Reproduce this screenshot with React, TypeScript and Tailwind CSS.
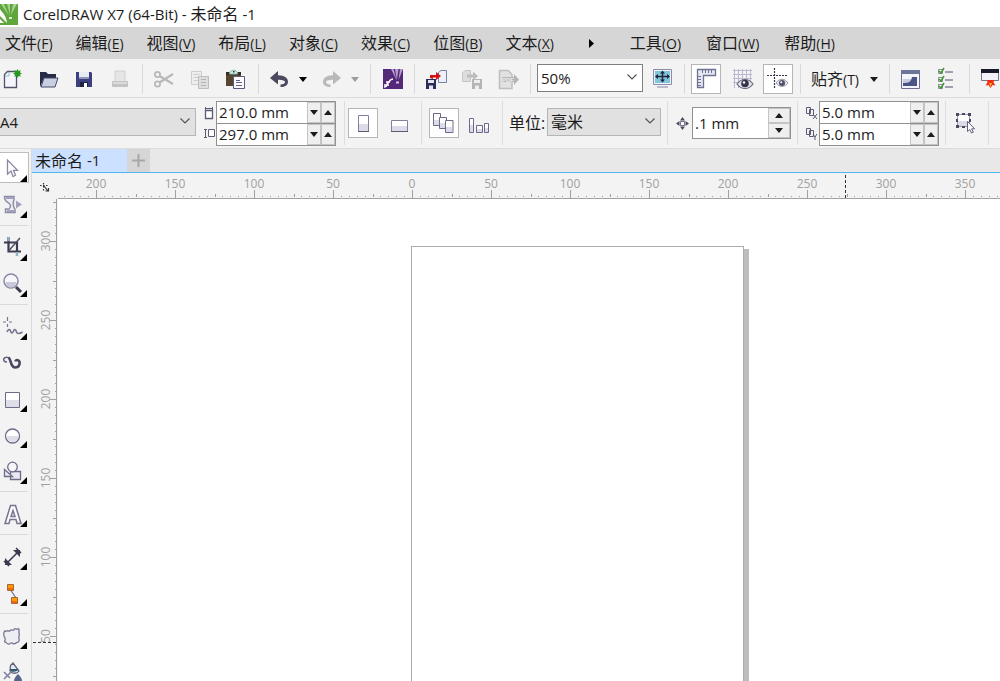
import React, {useEffect, useState} from "react"
import clsx from "clsx";

const PX_PER_MM = 1.58;

const menus = [
    {label: "文件", hotkey: "F"},
    {label: "编辑", hotkey: "E"},
    {label: "视图", hotkey: "V"},
    {label: "布局", hotkey: "L"},
    {label: "对象", hotkey: "C"},
    {label: "效果", hotkey: "C"},
    {label: "位图", hotkey: "B"},
    {label: "文本", hotkey: "X"},
];

const moreMenus = [
    {label: "工具", hotkey: "O"},
    {label: "窗口", hotkey: "W"},
    {label: "帮助", hotkey: "H"},
];

/* ---------- shared bits ---------- */

const MenuButton = ({label, hotkey}: { label: string, hotkey: string }) => (
    <button type="button" className="flex items-baseline text-[16px] hover:bg-gray-300">
        {label}<span className="text-[14px]">(<u className="underline-offset-2">{hotkey}</u>)</span>
    </button>
);

const Separator = () => (
    <div className="flex h-[30px] w-2 justify-center">
        <div className="w-px bg-[#d9d9d9]"/>
    </div>
);

const Divider = () => <div className="h-[44px] w-px bg-[#dedede]"/>;

type IconButtonProps = {
    label: string,
    pressed?: boolean,
    disabled?: boolean,
    onClick?: () => void,
    children: React.ReactNode
}

const IconButton = ({label, pressed, disabled, onClick, children}: IconButtonProps) => (
    <button
        type="button"
        aria-label={label}
        disabled={disabled}
        onClick={onClick}
        className={clsx("mx-[3px] flex h-[30px] w-[30px] items-center justify-center", pressed && "border border-[#b5b5b5] bg-white")}
    >
        <svg width="24" height="24" viewBox="0 0 24 24" fill="none" className="shrink-0">{children}</svg>
    </button>
);

const Triangle = ({dir, className}: { dir: "up" | "down", className?: string }) => (
    <svg width="8" height="5" viewBox="0 0 8 5" className={className} fill="currentColor">
        {dir === "down" ? <path d="M0 0h8L4 5z"/> : <path d="M0 5h8L4 0z"/>}
    </svg>
);

const DropArrow = ({label, disabled}: { label: string, disabled?: boolean }) => (
    <button type="button" aria-label={label} disabled={disabled}
            className="flex h-[30px] w-4 items-center pl-px text-black disabled:text-[#9c9c9c]">
        <Triangle dir="down"/>
    </button>
);

type SelectProps = {
    label: string,
    options: string[],
    className: string,
    boxClassName: string
}

const Select = ({label, options, className, boxClassName}: SelectProps) => (
    <div className={clsx("relative", boxClassName)}>
        <select aria-label={label} className={clsx("h-full w-full appearance-none border pl-[3px] leading-none outline-none", className)}>
            {options.map(option => <option key={option}>{option}</option>)}
        </select>
        <svg width="10" height="6" viewBox="0 0 10 6" fill="none" stroke="#555" strokeWidth="1.2"
             className="pointer-events-none absolute right-[6px] top-[10px]">
            <path d="M.5 .5 5 5 9.500 .5"/>
        </svg>
    </div>
);

const SpinField = ({label, initial}: { label: string, initial: string }) => {
    const [value, setValue] = useState(initial)

    const step = (amount: number) => {
        setValue(`${(parseFloat(value) + amount).toFixed(1)} mm`);
    };

    return (
        <div className="-mt-px flex h-[23px] w-[120px] border border-[#919191] bg-white">
            <input
                aria-label={label}
                value={value}
                onChange={(e) => setValue(e.target.value)}
                className="w-0 flex-1 pl-[2px] pt-px text-[15px] outline-none"
            />
            <button type="button" aria-label={`${label} -`} onClick={() => step(-1)}
                    className="flex w-[14px] items-center justify-center border border-[#c4c4c4] bg-[#efefef]">
                <Triangle dir="down" className="shrink-0"/>
            </button>
            <button type="button" aria-label={`${label} +`} onClick={() => step(1)}
                    className="flex w-[14px] items-center justify-center border border-[#c4c4c4] bg-[#efefef]">
                <Triangle dir="up" className="shrink-0"/>
            </button>
        </div>
    )
};

/* ---------- standard toolbar ---------- */

const StandardBar = () => {
    const [rulers, setRulers] = useState(true)
    const [grid, setGrid] = useState(false)
    const [guides, setGuides] = useState(true)

    return (
        <div className="-ml-[6px] flex h-[38px] items-end pb-[3px] *:shrink-0">
            <IconButton label="新建">
                <path d="M4.500 7.500 7.500 4.500H16.500V20.500H4.500z" fill="#f4f6fb" stroke="#55536b" strokeWidth="1.300"/>
                <path d="M5 9h4V5" stroke="#8fc4b8"/>
                <path d="m17.500 2 1 2 2.200-.7-.7 2.200 2 1-2 1 .7 2.200-2.200-.7-1 2-1-2-2.200.7.7-2.200-2-1 2-1-.7-2.200 2.200.7z" fill="#259a1c"/>
            </IconButton>
            <IconButton label="打开">
                <path d="M4 5h6l2 2h8v4H8l-4 9z" fill="#272a47"/>
                <path d="M8 11h14l-3 9H5z" fill="#c9cfe2" stroke="#464a68"/>
            </IconButton>
            <IconButton label="保存">
                <path d="M4 5h15l1 1v14H4z" fill="#3b3f80"/>
                <path d="M7 5h10v7H7z" fill="#e8eaf4"/>
                <path d="M7 10h10v2H7z" fill="#8f93b8"/>
                <path d="M8 15h8v5H8z" fill="#20223f"/>
                <path d="M12 16h3v4h-3z" fill="#fff"/>
            </IconButton>
            <IconButton label="打印" disabled>
                <path d="M7 4h10v11H7z" fill="#e6e6e6" stroke="#d0d0d0"/>
                <path d="M4 14h16v6H4z" fill="#c3c3c3"/>
                <path d="M5 15h14v2H5z" fill="#dadada"/>
            </IconButton>
            <Separator/>
            <IconButton label="剪切" disabled>
                <g stroke="#b9b9b9" strokeWidth="1.800">
                    <circle cx="5.500" cy="7.500" r="2.600"/>
                    <circle cx="5.500" cy="17" r="2.600"/>
                    <path d="M7.500 9 21 17M7.500 15.500 21 7" strokeWidth="2.200"/>
                </g>
            </IconButton>
            <IconButton label="复制" disabled>
                <g stroke="#cdcdcd" fill="#eeeeee">
                    <path d="M3.500 4.500h10v13h-10z"/>
                    <path d="M5.500 7.500h6M5.500 10.500h6M5.500 13.500h4"/>
                    <path d="M10.500 9.500H20.500V21.500H10.500z" fill="#ddd" stroke="#bdbdbd"/>
                    <path d="M13 12.500h5M13 15.500h5M13 18.500h5" stroke="#b5b5b5"/>
                </g>
            </IconButton>
            <IconButton label="粘贴">
                <path d="M2 5h15v14H2z" fill="#57452e"/>
                <path d="M2 5h15v3H2z" fill="#3a2d1d"/>
                <path d="M5.500 7c0-5 8-5 8 0z" fill="#d7efeb" stroke="#7fb9b2"/>
                <path d="M9 4h1.500v1.500H9z" fill="#3a2d1d"/>
                <path d="M9.500 9.500H20.500V21.500H9.500z" fill="#fafaff" stroke="#5d5b78"/>
                <path d="M12 13.500h4M12 15.500h6M12 18.500h6" stroke="#64648c"/>
            </IconButton>
            <Separator/>
            <IconButton label="撤消">
                <path d="M2 11 10 4v4.200c7 0 10 3 10 6.500 0 3.500-3 5.300-7.500 5.300v-2.500c3 0 4.500-1 4.500-2.500 0-1.300-2-2.300-7-2.300V17.500z" fill="#4b4960"/>
            </IconButton>
            <DropArrow label="撤消列表"/>
            <IconButton label="重做" disabled>
                <path d="M21 11 13 4v4.200c-7 0-10 3-10 6.500C3 18.200 6 20 10.500 20v-2.500C7.500 17.500 6 16.500 6 15c0-1.300 2-2.300 7-2.300V17.500z" fill="#b9b9b9"/>
            </IconButton>
            <DropArrow label="重做列表" disabled/>
            <Separator/>
            <IconButton label="搜索内容">
                <path d="M3 2h20v20H3z" fill="#54297a"/>
                <path d="M11 2h2.500l3 11zM15 2h3.500l-1.700 11zM20 2h3l-4.500 11z" fill="#b59ccc"/>
                <path d="M16 14.500h3v2h-3z" fill="#d6c6e4"/>
                <path d="M4 20c4 0 2-3 4-4s1-4 5-4M6 15h4M4 18h5" stroke="#fff" strokeWidth="1.600"/>
            </IconButton>
            <Separator/>
            <IconButton label="导入">
                <path d="M14.500 5.500 17 3.500H22.500V15.500H14.500z" fill="#eef1fa" stroke="#7781a5"/>
                <path d="M2 12h10v10H2z" fill="#2b2e58"/>
                <path d="M4 13h6v3H4zM5 18.500h4V22H5z" fill="#e4e6f2"/>
                <path d="M6 11V8h6V5l5 4-5 4v-2.500H9V12z" fill="#cc1414"/>
            </IconButton>
            <IconButton label="导出" disabled>
                <path d="M2.500 6 5 3.500h5.500v11h-8z" fill="#ddd" stroke="#c4c4c4"/>
                <path d="M12 12h10v10H12z" fill="#b5b5b5"/>
                <path d="M14 13h6v3h-6zM15 18.500h4V22h-4z" fill="#eee"/>
                <path d="M7 7.500h6V4.500l5 4.500-5 4.500v-3H7z" fill="#bcbcbc"/>
            </IconButton>
            <IconButton label="发布为 PDF" disabled>
                <path d="M3.500 3.500H12l4 4V21.500H3.500z" fill="#e1e1e1" stroke="#bebebe" strokeWidth="1.500"/>
                <path d="M6 10h12V7l5 5.500-5 5.500v-3H6z" fill="#b5b5b5"/>
                <text x="6" y="15" fontSize="6" fontWeight="700" fill="#eee" className="font-['Liberation_Sans',sans-serif]">PDF</text>
            </IconButton>
            <Separator/>
            <Select
                label="缩放级别"
                options={["50%", "75%", "100%", "200%"]}
                boxClassName="ml-[3px] mr-px h-[28px] w-[106px] mb-[2px]"
                className="border-[#7f7f7f] bg-white text-[15px]"
            />
            <IconButton label="全屏预览">
                <path d="M3.500 2.500H21.500V17.500H3.500z" fill="#f1f1f8" stroke="#8d8cab"/>
                <path d="M5 4h15v12H5z" fill="#7fc6d8"/>
                <path d="M7 20h11" stroke="#a9a8c0" strokeWidth="1.500"/>
                <path d="M12.500 5v9M6 9.500h13" stroke="#22243e" strokeWidth="1.500"/>
                <path d="M12.500 3.500l2.500 3h-5zM12.500 15.500l2.500-3h-5zM5 9.500l3-2.500v5zM20 9.500l-3-2.500v5z" fill="#22243e"/>
            </IconButton>
            <Separator/>
            <IconButton label="显示标尺" pressed={rulers} onClick={() => setRulers(!rulers)}>
                <path d="M3.500 2.500h18v6h-12v12h-6z" fill="#e4e6f0" stroke="#6e7394" strokeWidth="1.300"/>
                <path d="M8.500 3v3M11.500 3v3M14.500 3v3M17.500 3v3M4 9.500h3M4 12.500h3M4 15.500h3M4 18.500h3" stroke="#6e7394"/>
            </IconButton>
            <IconButton label="显示网格" pressed={grid} onClick={() => setGrid(!grid)}>
                <path d="M4.500 2v19M8.500 2v19M12.500 2v11M16.500 2v10M20.500 2v12M3 3.500h19M3 7.500h19M3 11.500h19M3 15.500h7" stroke="#b9b8d0"/>
                <path d="M7 17c4-6 12-6 16 0-4 6-12 6-16 0z" fill="#e3e3ea" stroke="#6a6a80" strokeWidth="1.200"/>
                <circle cx="15" cy="16.500" r="3.800" fill="#34354a"/>
                <circle cx="14" cy="15.500" r="1.200" fill="#fff"/>
            </IconButton>
            <IconButton label="显示辅助线" pressed={guides} onClick={() => setGuides(!guides)}>
                <path d="M8.500 1v20M1 8.500h20" stroke="#34344a" strokeWidth="1.200" strokeDasharray="2 1"/>
                <path d="M10 16c3-5 9-5 12 0-3 4.500-9 4.500-12 0z" fill="#e3e3ea" stroke="#9a9aaa"/>
                <circle cx="16" cy="16" r="3" fill="#4f5065"/>
                <circle cx="15.300" cy="15.300" r="1" fill="#fff"/>
            </IconButton>
            <Separator/>
            <button type="button" className="flex h-[30px] w-[81px] items-center justify-between px-[7px] text-[16px]">
                <span className="flex items-baseline">贴齐<span className="text-[14px]">(T)</span></span>
                <Triangle dir="down"/>
            </button>
            <Separator/>
            <IconButton label="欢迎屏幕">
                <path d="M2.500 3.500H20.500V21.500H2.500z" fill="#f4f5fa" stroke="#6d7092"/>
                <path d="M2 3h19v4H2z" fill="#6d7399"/>
                <path d="M4 12h8v7H4z" fill="#c9cde0"/>
                <path d="M4 16c6 0 8-1 9-6h5v9H4z" fill="#4c5486"/>
            </IconButton>
            <IconButton label="选项">
                <path d="M3.500 2.500h4v4h-4zM3.500 10.500h4v4h-4zM3.500 17.500h4v4h-4z" fill="#fff" stroke="#8a8a9b"/>
                <path d="M10 5h8M10 13h8M10 20h8" stroke="#86859c" strokeWidth="1.500"/>
                <path d="m4 4 2 2 3-5M4 12l2 2 3-5M4 19l2 2 3-5" stroke="#3d9a2d" strokeWidth="1.500"/>
            </IconButton>
            <Separator/>
            <IconButton label="应用程序启动器">
                <path d="M2.500 2.500h17v11h-17z" fill="#f2f2f6" stroke="#77778c"/>
                <path d="M2 2h18v4H2z" fill="#17182a"/>
                <path d="M8 13h7l-.5 2.500 2 3-3-.5-2 3-2-3-3 .5 2-3z" fill="#ef2a10"/>
                <path d="M10 16h3l-1.500 4z" fill="#ffb52e"/>
            </IconButton>
        </div>
    )
};

/* ---------- property bar ---------- */

const PropertyBar = () => {
    const [portrait, setPortrait] = useState(true)
    const [allPages, setAllPages] = useState(true)
    const [nudge, setNudge] = useState(".1 mm")

    return (
        <div className="flex h-[50px] items-center *:shrink-0">
            <Select
                label="页面大小"
                options={["A4", "A3", "Letter"]}
                boxClassName="-ml-1 h-[28px] w-[200px] mb-[2px]"
                className="border-[#b5b5b5] bg-[#e1e1e1] text-[15px]"
            />
            <div className="ml-[6px] flex items-center gap-px pr-2">
                <svg width="13" height="36" viewBox="0 0 13 36" fill="none" stroke="#5c5a74">
                    <path d="M3 3.500h8M3.500 2v3M10.500 2v3"/>
                    <path d="M3.500 5.500h7v8h-7z" fill="#fff" strokeWidth="1.300"/>
                    <path d="M3.500 24v9M2 24.500h3M2 32.500h3"/>
                    <path d="M6.500 24.500h6v7h-6z" fill="#fff"/>
                </svg>
                <div className="flex flex-col pt-px">
                    <SpinField label="页面宽度" initial="210.0 mm"/>
                    <SpinField label="页面高度" initial="297.0 mm"/>
                </div>
            </div>
            <Divider/>
            <div className="flex pr-1">
                <IconButton label="纵向" pressed={portrait} onClick={() => setPortrait(true)}>
                    <path d="M7.500 4.500h10v16h-10z" fill="#fff" stroke="#8180a0"/>
                    <path d="M8 13h9v7H8z" fill="#dcdce8"/>
                    <path d="M7 20.500h11" stroke="#5c5a74"/>
                </IconButton>
                <IconButton label="横向" pressed={!portrait} onClick={() => setPortrait(false)}>
                    <path d="M4.500 9.500h16v11h-16z" fill="#fff" stroke="#8180a0"/>
                    <path d="M5 15h15v5H5z" fill="#dcdce8"/>
                    <path d="M4 20.500h17" stroke="#5c5a74"/>
                </IconButton>
            </div>
            <Divider/>
            <div className="flex px-1">
                <IconButton label="所有页面" pressed={allPages} onClick={() => setAllPages(true)}>
                    <g fill="#fff" stroke="#6d6b8a">
                        <path d="M1.500 2.500h7v12h-7z"/>
                        <path d="M7.500 6.500h7v11h-7z"/>
                        <path d="M13.500 9.500h7.500v12h-7.500z"/>
                    </g>
                    <path d="M2 9h5v5H2zM8 12h5v5H8zM14 16h6v5h-6z" fill="#dcdce8"/>
                </IconButton>
                <IconButton label="当前页" pressed={!allPages} onClick={() => setAllPages(false)}>
                    <g fill="#fff" stroke="#6d6b8a">
                        <path d="M1.500 7.500h4v14h-4z"/>
                        <path d="M8.500 14.500h6v7h-6z"/>
                        <path d="M16.500 12.500h4v9h-4z"/>
                    </g>
                    <path d="M2 14h3v7H2zM9 18h5v3H9zM17 17h3v4h-3z" fill="#dcdce8"/>
                </IconButton>
            </div>
            <Divider/>
            <div className="flex items-center pl-[6px] pr-[6px]">
                <span className="w-[38px] whitespace-nowrap text-[16px] leading-none">单位:</span>
                <Select
                    label="单位"
                    options={["毫米", "厘米", "英寸", "像素"]}
                    boxClassName="h-[28px] w-[114px] mb-[2px]"
                    className="border-[#b5b5b5] bg-[#e1e1e1] text-[16px]"
                />
            </div>
            <Divider/>
            <div className="flex items-center gap-[3px] pl-2 pr-[6px]">
                <svg width="13" height="13" viewBox="0 0 13 13">
                    <path d="M6.500 0 9 3.500H4zM6.500 13 9 9.500H4zM0 6.500 3.500 4v5zM13 6.500 9.500 4v5z" fill="#4b4960"/>
                    <path d="M4.500 4.500h4v4h-4z" fill="#fff" stroke="#77758e"/>
                </svg>
                <div className="flex h-[32px] w-[99px] border border-[#919191] bg-white">
                    <input aria-label="微调距离" value={nudge} onChange={(e) => setNudge(e.target.value)}
                           className="w-0 flex-1 pl-[2px] text-[15px] outline-none"/>
                    <div className="flex w-[22px] flex-col">
                        <button type="button" aria-label="增加微调"
                                className="flex flex-1 items-center justify-center border border-[#c4c4c4] bg-[#efefef]">
                            <Triangle dir="up"/>
                        </button>
                        <button type="button" aria-label="减少微调"
                                className="flex flex-1 items-center justify-center border border-[#c4c4c4] bg-[#efefef]">
                            <Triangle dir="down"/>
                        </button>
                    </div>
                </div>
            </div>
            <Divider/>
            <div className="flex items-center gap-px pl-[7px] pr-[6px]">
                <svg width="13" height="36" viewBox="0 0 13 36" fill="none" stroke="#5c5a74">
                    <path d="M1.500 2.500h4v6h-4zM4.500 4.500h4v6h-4zM8 9l4 5M12 9l-4 5"/>
                    <path d="M1.500 23.500h4v6h-4zM4.500 25.500h4v6h-4zM8 29l2 3 2-3M10 32v3"/>
                </svg>
                <div className="flex flex-col pt-px">
                    <SpinField label="再制距离 X" initial="5.0 mm"/>
                    <SpinField label="再制距离 Y" initial="5.0 mm"/>
                </div>
            </div>
            <Divider/>
            <div className="flex pl-px pr-[5px]">
                <IconButton label="视为已填充">
                    <path d="M4.500 3.500h12v12h-12z" fill="#fff" stroke="#9a99ae"/>
                    <path d="M5 10h11v5H5z" fill="#dcdce8"/>
                    <path d="M3 2h3v3H3zM9 2h3v2H9zM15 2h3v3h-3zM3 8h2v3H3zM16 8h2v3h-2zM3 14h3v3H3zM9 15h3v2H9z" fill="#4b4960"/>
                    <path d="M14.500 10.500v10l2.300-2 1.700 3.500 1.800-.8-1.700-3.400h3z" fill="#fff" stroke="#63617c"/>
                </IconButton>
            </div>
            <Divider/>
        </div>
    )
};

/* ---------- toolbox ---------- */

type Tool = {
    name: string,
    noFlyout?: boolean,
    icon: React.ReactNode
}

const toolGroups: Tool[][] = [
    [
        {
            name: "选择工具",
            icon: <path d="M7.500 10v14l3.500-3 2 5.500 2.500-1.200-2-5h4z" fill="#fff" stroke="#8a89a5" strokeWidth="1.300"/>
        },
        {
            name: "形状工具",
            icon: <>
                <path d="M4.500 10.500H14v3c-1 3-1 7 1 10v3H5.500v-3.500H9c3-3 1-5-1-6.500-2-1-3.500-3-3.500-6z" fill="#ececf3" stroke="#8e8da8" strokeWidth="1.500"/>
                <path d="M6 12h8M7 25h7" stroke="#a3a2bd" strokeWidth="2"/>
                <path d="M16 14.500v8l6-4z" fill="#a3a2bd"/>
            </>
        },
    ],
    [
        {
            name: "裁剪工具",
            icon: <>
                <path d="M4 13.500h13V27M8.500 8v14.500H21" stroke="#3c3a50" strokeWidth="2.200"/>
                <path d="M8.500 22 20 9" stroke="#4b4960" strokeWidth="1.400"/>
                <path d="M8.500 8v4M17 23v4" stroke="#8fb6c4" strokeWidth="2"/>
            </>
        },
        {
            name: "缩放工具",
            icon: <>
                <path d="m16 22 5 5" stroke="#3c3a50" strokeWidth="3"/>
                <circle cx="11" cy="16" r="7" fill="#f6f6fb" stroke="#8a89a5" strokeWidth="1.500"/>
                <path d="M5.500 17h11a5.500 5.500 0 0 1-11 0z" fill="#c9c9db"/>
            </>
        },
    ],
    [
        {
            name: "手绘工具",
            icon: <>
                <path d="M7.500 9v4M7.500 16v3M3 14h3M9 14h3" stroke="#77758e" strokeWidth="1.200"/>
                <path d="M7 24c1-3 3-3 3.500-1s2 3 3 0 2.500-1 3 1 3 2 6 0" stroke="#77758e" strokeWidth="1.600"/>
            </>
        },
        {
            name: "艺术笔工具",
            noFlyout: true,
            icon: <>
                <path d="M7 18c-3 0-4-2-3-3.500 1-1.500 4-2 5.500.5" stroke="#63617c" strokeWidth="1.500"/>
                <path d="M8.500 13.500c3 2 1.500 9.500 6.500 10 5 0 5.500-5.500 3.500-7-1.500-1-3 0-3 1" stroke="#4b4960" strokeWidth="2.600"/>
            </>
        },
        {
            name: "矩形工具",
            icon: <>
                <path d="M5.500 12.500h14v15h-14z" fill="#fff" stroke="#6d6b8a"/>
                <path d="M6 20h13v7H6z" fill="#dedee9"/>
            </>
        },
        {
            name: "椭圆形工具",
            icon: <>
                <circle cx="12.500" cy="20" r="7" fill="#fff" stroke="#6d6b8a" strokeWidth="1.300"/>
                <path d="M6.500 20h12a6 6 0 0 1-12 0z" fill="#dedee9"/>
            </>
        },
        {
            name: "多边形工具",
            icon: <>
                <path d="M10.500 19.500h10v8h-10z" fill="#e9e9f2" stroke="#6d6b8a" strokeWidth="1.300"/>
                <path d="M4.500 17.500v7h8z" fill="#e9e9f2" stroke="#6d6b8a" strokeWidth="1.300"/>
                <circle cx="12.500" cy="15" r="4.800" fill="#f6f6fb" stroke="#6d6b8a" strokeWidth="1.300"/>
            </>
        },
    ],
    [
        {
            name: "文本工具",
            icon: <path d="M5 28.500 10.500 10.500h5L21 28.500h-4l-1-4h-6l-1 4zM11 21.500h4l-2-6z" fill="#fafaff" stroke="#77758e" strokeWidth="1.500"/>
        },
    ],
    [
        {
            name: "平行度量工具",
            icon: <>
                <path d="M6 26 19 13" stroke="#3c3a50" strokeWidth="1.600"/>
                <path d="M5 20v7h7zM13 12h7v7z" fill="#3c3a50"/>
                <path d="m4 23 5 5M16 10l5 5" stroke="#3c3a50" strokeWidth="1.500"/>
            </>
        },
        {
            name: "直线连接器工具",
            icon: <>
                <path d="m10 15 6 9" stroke="#77758e" strokeWidth="1.300"/>
                <path d="M7.500 10.500h6v6h-6zM11.500 23.500h6v6h-6z" fill="#ff9a00" stroke="#a8653a"/>
                <path d="M8 14h5v2H8zM12 27h5v2h-5z" fill="#f4660a"/>
            </>
        },
    ],
    [
        {
            name: "变形工具",
            icon: <path d="M4.500 14c2 1 3-1 4 0 1.500 1 2-2 3.500-1s1.500 0 2.500-1 2 1 3 0 2 0 1.500 2 1 3 0 5 1 3 0 5-2 1-3 2-3 1-4 0-2 2-4 1-2-2-3-2 1-3 0-4-2-4-.5-7z" fill="#ededf4" stroke="#77758e" strokeWidth="1.300"/>
        },
        {
            name: "颜色滴管工具",
            noFlyout: true,
            icon: <>
                <path d="M10.500 12.500 13 10l6 8c-2 3-7 3-9 0z" fill="#e6eaf2" stroke="#63617c" strokeWidth="1.300"/>
                <path d="M10 16h8c0 3-7 4-8 1z" fill="#2f5573"/>
                <path d="m11 19-7 7M4 19l6 6" stroke="#8180a0" strokeWidth="1.600"/>
                <path d="M18 21c3 3 4 5 4 7h-8c0-2 1-4 4-7z" fill="#55658e"/>
            </>
        },
    ],
];

const Toolbox = () => {
    const [active, setActive] = useState("选择工具")

    return (
        <aside className="flex w-[32px] shrink-0 flex-col overflow-hidden border-r border-[#d9d9d9] bg-[#f3f3f3] pt-px">
            {toolGroups.map((group, i) => (
                <div key={i} className="shrink-0">
                    {i > 0 && <div className="flex h-[7px] items-center"><div className="h-px w-[28px] bg-[#d9d9d9]"/></div>}
                    {group.map(tool => (
                        <button
                            key={tool.name}
                            type="button"
                            aria-label={tool.name}
                            onClick={() => setActive(tool.name)}
                            className="block h-[36px]"
                        >
                            <svg width="29" height="36" viewBox="0 0 29 36" fill="none">
                                {active === tool.name && <path d="M-1 2.500h29.500v30H-1z" fill="#fff" stroke="#bdbdbd"/>}
                                {tool.icon}
                                {!tool.noFlyout && <path d="M27 25v7h-7z" fill="#000"/>}
                            </svg>
                        </button>
                    ))}
                </div>
            ))}
        </aside>
    )
};

/* ---------- rulers ---------- */

const range = (from: number, to: number, step: number) => {
    const out: number[] = [];
    for (let n = from; n <= to; n += step) out.push(n);
    return out;
};

const roundDown = (n: number, step: number) => Math.floor(n / step) * step;

const useWindowSize = () => {
    const [size, setSize] = useState({width: window.innerWidth, height: window.innerHeight})

    useEffect(() => {
        const onResize = () => setSize({width: window.innerWidth, height: window.innerHeight});
        window.addEventListener("resize", onResize);
        return () => window.removeEventListener("resize", onResize);
    }, []);

    return size;
};

// page origin sits 354px right of the canvas edge
const HorizontalRuler = ({width}: { width: number }) => {
    const lastMm = (width - 354 - 14) / PX_PER_MM;

    return (
        <svg className="h-[25px] w-0 flex-1" fill="#a0a0a0">
            {range(-220, roundDown(lastMm + 10, 5), 5).map(mm => {
                const x = Math.round(354 + mm * PX_PER_MM);
                if (mm % 50 === 0) return <rect key={mm} x={x} y="16" width="1" height="8"/>
                if (mm % 25 === 0) return <rect key={mm} x={x} y="20" width="1" height="3"/>
                return <rect key={mm} x={x} y="22" width="1" height="1"/>
            })}
            {range(-200, roundDown(lastMm, 50), 50).map(mm => (
                <text key={mm} x={Math.round(354 + mm * PX_PER_MM)} y="14" textAnchor="middle" fontSize="12">{Math.abs(mm)}</text>
            ))}
            <rect x="0" y="24" width="100%" height="1"/>
            <path d="M787.500 1v23" stroke="#333" strokeDasharray="3 2"/>
        </svg>
    )
};

const VerticalRuler = ({height}: { height: number }) => {
    const lowestMm = (516 - height + 14) / PX_PER_MM;

    return (
        <svg className="h-full w-[26px] shrink-0" fill="#a0a0a0">
            {range(-roundDown(10 - lowestMm, 5), 325, 5).map(mm => {
                const y = Math.round(516 - mm * PX_PER_MM);
                const width = mm % 50 === 0 ? 7 : mm % 25 === 0 ? 4 : 2;
                return <rect key={mm} x={25 - width} y={y} width={width} height="1"/>
            })}
            {range(-roundDown(-lowestMm, 50), 300, 50).map(mm => {
                const y = Math.round(516 - mm * PX_PER_MM);
                return <text key={mm} x="18" y={y} textAnchor="middle" fontSize="12" transform={`rotate(-90 18 ${y})`}>{Math.abs(mm)}</text>
            })}
            <rect x="24" y="0" width="1" height="100%"/>
            <path d="M1 443.500h24" stroke="#333" strokeDasharray="3 2"/>
        </svg>
    )
};

const Workspace = () => {
    const {width, height} = useWindowSize();

    return (
        <section className="flex min-w-0 flex-1 flex-col">
            <div className="flex h-[24px] shrink-0 border-b border-[#4db8f0] bg-[#e8e8e8]">
                <button type="button" className="flex w-[95px] items-center whitespace-pre bg-[#cce0ff] pl-[3px] text-[16px]">
                    未命名<span className="text-[15px]"> -1</span>
                </button>
                <button type="button" aria-label="新建文档" className="flex w-[23px] items-center justify-center bg-[#d6d6d6]">
                    <svg width="13" height="13" viewBox="0 0 13 13" stroke="#a8a8a8" strokeWidth="2"><path d="M6.500 0v13M0 6.500h13"/></svg>
                </button>
            </div>
            <div className="flex shrink-0 bg-[#f3f3f3] pt-px">
                <svg width="26" height="25" viewBox="0 0 26 25" fill="none" stroke="#333" strokeWidth="1.200">
                    <path d="M8 11.500h9M11.500 9v9" strokeDasharray="1.500 1.500"/>
                    <path d="m12 12 4 5M16.500 14v3h-3"/>
                </svg>
                <HorizontalRuler width={width - 58}/>
            </div>
            <div className="flex min-h-0 flex-1 bg-[#f3f3f3]">
                <VerticalRuler height={height - 199}/>
                <main className="relative flex-1 overflow-hidden bg-white">
                    <div className="absolute left-[358px] top-[50px] h-[469px] w-[333px] bg-[#bdbdbd]"/>
                    <div className="absolute left-[353px] top-[47px] h-[469px] w-[333px] border border-[#ababab] bg-white"/>
                </main>
            </div>
        </section>
    )
};

const App = () => {
    return (
        <div className="flex h-screen flex-col overflow-hidden bg-white font-['Open_Sans','Noto_Sans_CJK_SC',sans-serif] text-[#1c1c1c]">
            <header className="flex h-[27px] shrink-0 items-center">
                <svg width="18" height="24" viewBox="0 0 18 24" className="shrink-0">
                    <path d="M0 2h18v21H0z" fill="#5ea63c"/>
                    <path d="M1 2h3l5 12zM7 2h3v11zM13 2h4l-6 11z" fill="#a6d18d"/>
                    <path d="M0 7c2 4 6 5 7 14L0 14z" fill="#fff"/>
                    <path d="M0 17l4 4H0z" fill="#fff"/>
                    <path d="M9 15h3v2H9z" fill="#d6ebcb"/>
                </svg>
                <h1 className="ml-[5px] whitespace-nowrap text-[15px]">CorelDRAW X7 (64-Bit) - <span className="text-[16px]">未命名</span> -1</h1>
            </header>
            <nav className="flex h-[32px] shrink-0 items-center gap-[23px] whitespace-nowrap bg-[#d6d6d6] pl-[5px]">
                {menus.map(menu => <MenuButton key={menu.label} {...menu}/>)}
                <button type="button" aria-label="更多" className="flex w-[30px] justify-center">
                    <svg width="6" height="9" viewBox="0 0 6 9"><path d="M0 0v9l5-4.500z"/></svg>
                </button>
                <div className="flex gap-[25px]">
                    {moreMenus.map(menu => <MenuButton key={menu.label} {...menu}/>)}
                </div>
            </nav>
            <div className="shrink-0 overflow-hidden border-b border-[#dcdcdc] bg-[#f3f3f3]"><StandardBar/></div>
            <div className="shrink-0 overflow-hidden border-b border-[#dcdcdc] bg-[#f3f3f3]"><PropertyBar/></div>
            <div className="flex min-h-0 flex-1">
                <Toolbox/>
                <Workspace/>
            </div>
        </div>
    )
};

export default App;
